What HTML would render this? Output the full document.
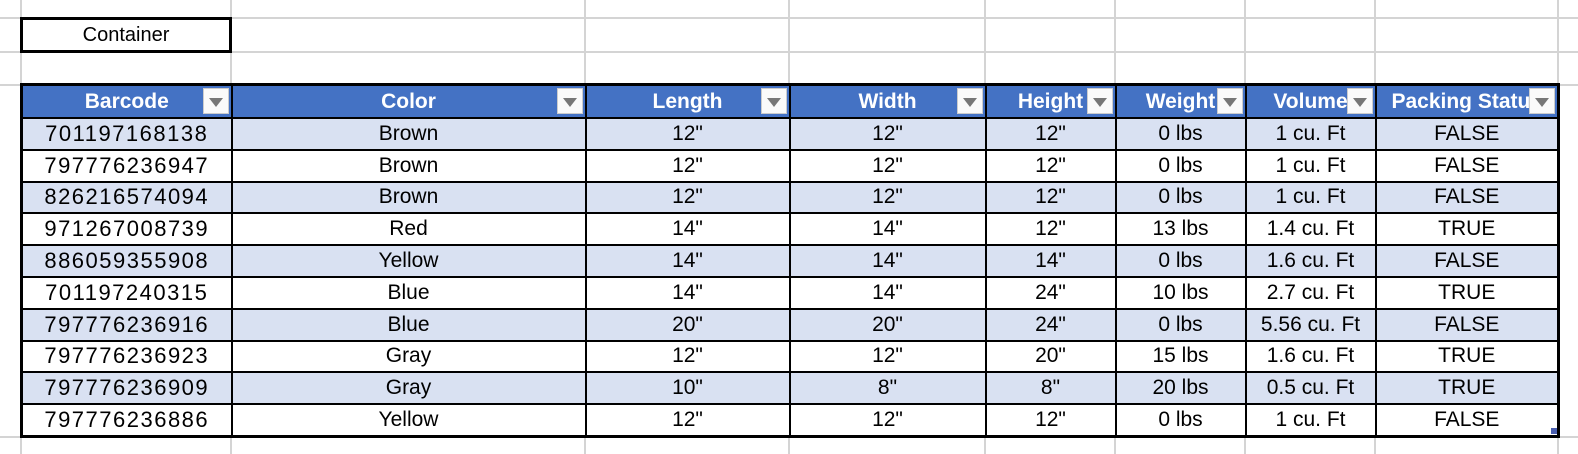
<!DOCTYPE html>
<html><head><meta charset="utf-8"><style>
html,body{margin:0;padding:0;background:#fff;width:1578px;height:454px;overflow:hidden;position:relative;font-family:"Liberation Sans",Arial,sans-serif}
.gv{position:absolute;top:0;width:2px;height:454px;background:#d4d4d4}
.gh{position:absolute;left:0;height:2px;width:1578px;background:#d4d4d4}
.box{position:absolute;left:20px;top:17px;width:206px;height:30px;border:3px solid #000;background:#fff;text-align:center;line-height:30px;font-size:20px}
table{position:absolute;left:20px;top:83px;border-collapse:collapse;table-layout:fixed;border:3px solid #000;background:#fff}
td,th{border:2px solid #000;text-align:center;padding:0;font-size:21px;color:#000;white-space:nowrap;overflow:hidden}
td:first-child{letter-spacing:1.5px;font-size:22px}
th{background:#4472c4;color:#fff;font-weight:bold;height:31px;position:relative;text-align:center;font-size:21px}
th span.t{display:block;overflow:hidden}
.f{position:absolute;right:2px;top:2px;width:26px;height:26px;background:#fafafa;border:1px solid #ccc;box-sizing:border-box;z-index:2}
.f:after{content:"";position:absolute;left:5px;top:9px;border-left:7px solid transparent;border-right:7px solid transparent;border-top:9px solid #777}
td{height:29.8px}
tr.a td{background:#d9e1f2}
.corner{position:absolute;left:1551px;top:428px;width:6px;height:6px;background:#4a5fb0}
</style></head><body>
<div class="gv" style="left:20px"></div><div class="gv" style="left:230px"></div><div class="gv" style="left:584px"></div><div class="gv" style="left:788px"></div><div class="gv" style="left:984px"></div><div class="gv" style="left:1114px"></div><div class="gv" style="left:1244px"></div><div class="gv" style="left:1374px"></div><div class="gv" style="left:1557px"></div>
<div class="gh" style="top:17px"></div><div class="gh" style="top:51px"></div><div class="gh" style="top:84px"></div><div class="gh" style="top:436px"></div>
<div class="box">Container</div>
<table>
<colgroup><col style="width:210px"><col style="width:354px"><col style="width:204px"><col style="width:196px"><col style="width:130px"><col style="width:130px"><col style="width:130px"><col style="width:183px"></colgroup>
<tr><th><span class="t">Barcode</span><i class="f"></i></th><th><span class="t">Color</span><i class="f"></i></th><th><span class="t">Length</span><i class="f"></i></th><th><span class="t">Width</span><i class="f"></i></th><th><span class="t">Height</span><i class="f"></i></th><th><span class="t">Weight</span><i class="f"></i></th><th><span class="t">Volume</span><i class="f"></i></th><th><span class="t">Packing Status</span><i class="f"></i></th></tr>
<tr class="a"><td>701197168138</td><td>Brown</td><td>12"</td><td>12"</td><td>12"</td><td>0 lbs</td><td>1 cu. Ft</td><td>FALSE</td></tr>
<tr><td>797776236947</td><td>Brown</td><td>12"</td><td>12"</td><td>12"</td><td>0 lbs</td><td>1 cu. Ft</td><td>FALSE</td></tr>
<tr class="a"><td>826216574094</td><td>Brown</td><td>12"</td><td>12"</td><td>12"</td><td>0 lbs</td><td>1 cu. Ft</td><td>FALSE</td></tr>
<tr><td>971267008739</td><td>Red</td><td>14"</td><td>14"</td><td>12"</td><td>13 lbs</td><td>1.4 cu. Ft</td><td>TRUE</td></tr>
<tr class="a"><td>886059355908</td><td>Yellow</td><td>14"</td><td>14"</td><td>14"</td><td>0 lbs</td><td>1.6 cu. Ft</td><td>FALSE</td></tr>
<tr><td>701197240315</td><td>Blue</td><td>14"</td><td>14"</td><td>24"</td><td>10 lbs</td><td>2.7 cu. Ft</td><td>TRUE</td></tr>
<tr class="a"><td>797776236916</td><td>Blue</td><td>20"</td><td>20"</td><td>24"</td><td>0 lbs</td><td>5.56 cu. Ft</td><td>FALSE</td></tr>
<tr><td>797776236923</td><td>Gray</td><td>12"</td><td>12"</td><td>20"</td><td>15 lbs</td><td>1.6 cu. Ft</td><td>TRUE</td></tr>
<tr class="a"><td>797776236909</td><td>Gray</td><td>10"</td><td>8"</td><td>8"</td><td>20 lbs</td><td>0.5 cu. Ft</td><td>TRUE</td></tr>
<tr><td>797776236886</td><td>Yellow</td><td>12"</td><td>12"</td><td>12"</td><td>0 lbs</td><td>1 cu. Ft</td><td>FALSE</td></tr>
</table>
<div class="corner"></div>
</body></html>
